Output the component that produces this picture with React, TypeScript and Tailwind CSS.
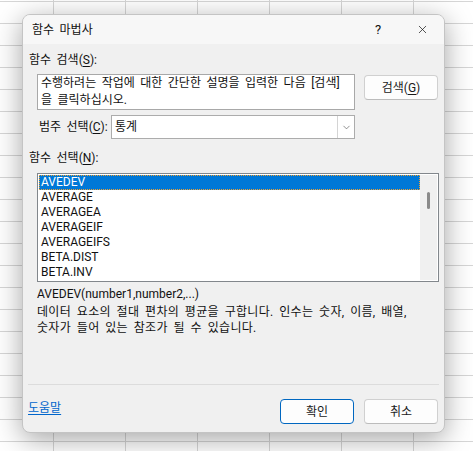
import { X, ChevronDown } from 'lucide-react'

const items = ['AVEDEV', 'AVERAGE', 'AVERAGEA', 'AVERAGEIF', 'AVERAGEIFS', 'BETA.DIST', 'BETA.INV']

function Btn({ label, hot, primary }: { label: string; hot?: string; primary?: boolean }) {
  return (
    <button
      className={
        'w-[74px] h-[25px] rounded-[4px] bg-[#fdfdfd] text-[12px] text-[#1a1a1a] flex items-center justify-center border ' +
        (primary ? 'border-[#0067c0]' : 'border-[#d0d0d0] border-b-[#bcbcbc]')
      }
    >
      {label}
      {hot && (
        <span>
          (<span className="underline underline-offset-2">{hot}</span>)
        </span>
      )}
    </button>
  )
}

export default function App() {
  return (
    <div className="w-[473px] h-[451px] overflow-hidden bg-white bg-[linear-gradient(to_right,#d6d6d6_1px,transparent_1px),linear-gradient(to_bottom,#d6d6d6_1px,transparent_1px)] bg-[size:72px_22px] bg-[position:53px_1px] pl-[22px] pt-[14px] font-[Roboto,'Noto_Sans_CJK_KR',sans-serif] text-[12px] leading-[16px] text-[#111] [word-spacing:2.5px]">
      <div className="w-[423px] h-[419px] rounded-[8px] bg-[#f0f0f0] border border-[#c4c4c4] shadow-[0_6px_28px_rgba(0,0,0,0.36)] overflow-hidden">
        {/* Title bar */}
        <div className="h-[29px] bg-[#f7f7f7] flex items-center pl-[9px]">
          <span className="flex-1">함수 마법사</span>
          <span className="w-[20px] text-center mr-[28px] text-[13px]">?</span>
          <X className="w-[13px] h-[13px] mr-[15px]" strokeWidth={1.3} />
        </div>

        <div className="px-[6px]">
          <div className="mt-[8px]">
            함수 검색(<span className="underline underline-offset-2">S</span>):
          </div>

          {/* search row */}
          <div className="flex items-start mt-[6px] ml-[8px]">
            <div className="w-[318px] h-[36px] bg-white border border-[#a8a8a8] px-[3px] leading-[17px]">
              수행하려는 작업에 대한 간단한 설명을 입력한 다음 [검색]
              <br />을 클릭하십시오.
            </div>
            <div className="ml-[9px] mt-[1px]">
              <Btn label="검색" hot="G" />
            </div>
          </div>

          {/* category */}
          <div className="flex items-center mt-[5px] ml-[10px]">
            <span className="w-[72px] whitespace-nowrap">
              범주 선택(<span className="underline underline-offset-2">C</span>):
            </span>
            <div className="w-[244px] h-[24px] bg-white border border-[#acacac] flex items-center">
              <span className="flex-1 pl-[3px]">통계</span>
              <div className="w-[17px] h-[22px] border-l border-[#d4d4d4] flex items-center justify-center">
                <ChevronDown className="w-[11px] h-[11px] text-[#555]" strokeWidth={1.4} />
              </div>
            </div>
          </div>

          <div className="mt-[11px]">
            함수 선택(<span className="underline underline-offset-2">N</span>):
          </div>

          {/* list */}
          <div className="mt-[7px] ml-[8px] w-[402px] h-[109px] bg-white border border-[#82878c] flex p-px">
            <div className="flex-1">
              {items.map((it, i) => (
                <div
                  key={it}
                  className={
                    'h-[15px] leading-[15px] pl-[2px] ' +
                    (i === 0 ? 'bg-[#0078d7] text-white outline-1 outline-dotted outline-[#f0a030] -outline-offset-1' : '')
                  }
                >
                  {it}
                </div>
              ))}
            </div>
            <div className="w-[17px] bg-[#f0f0f0] flex justify-center pt-[17px]">
              <div className="w-[3px] h-[17px] rounded-full bg-[#8a8a8a]" />
            </div>
          </div>

          <div className="mt-[4px] ml-[8px] [word-spacing:0px]">AVEDEV(number1,number2,...)</div>
          <div className="mt-[2px] ml-[8px] tracking-[0.3px]">
            데이터 요소의 절대 편차의 평균을 구합니다. 인수는 숫자, 이름, 배열,
            <br />
            숫자가 들어 있는 참조가 될 수 있습니다.
          </div>
        </div>

        {/* separator */}
        <div className="mt-[48px] ml-[5px] w-[411px] h-px bg-[#dcdcdc]" />

        <div className="flex items-start mt-[14px] pl-[5px] pr-[6px]">
          <span className="flex-1 mt-[1px] text-[#0066cc] underline underline-offset-2">도움말</span>
          <Btn label="확인" primary />
          <div className="ml-[10px]">
            <Btn label="취소" />
          </div>
        </div>
      </div>
    </div>
  )
}
